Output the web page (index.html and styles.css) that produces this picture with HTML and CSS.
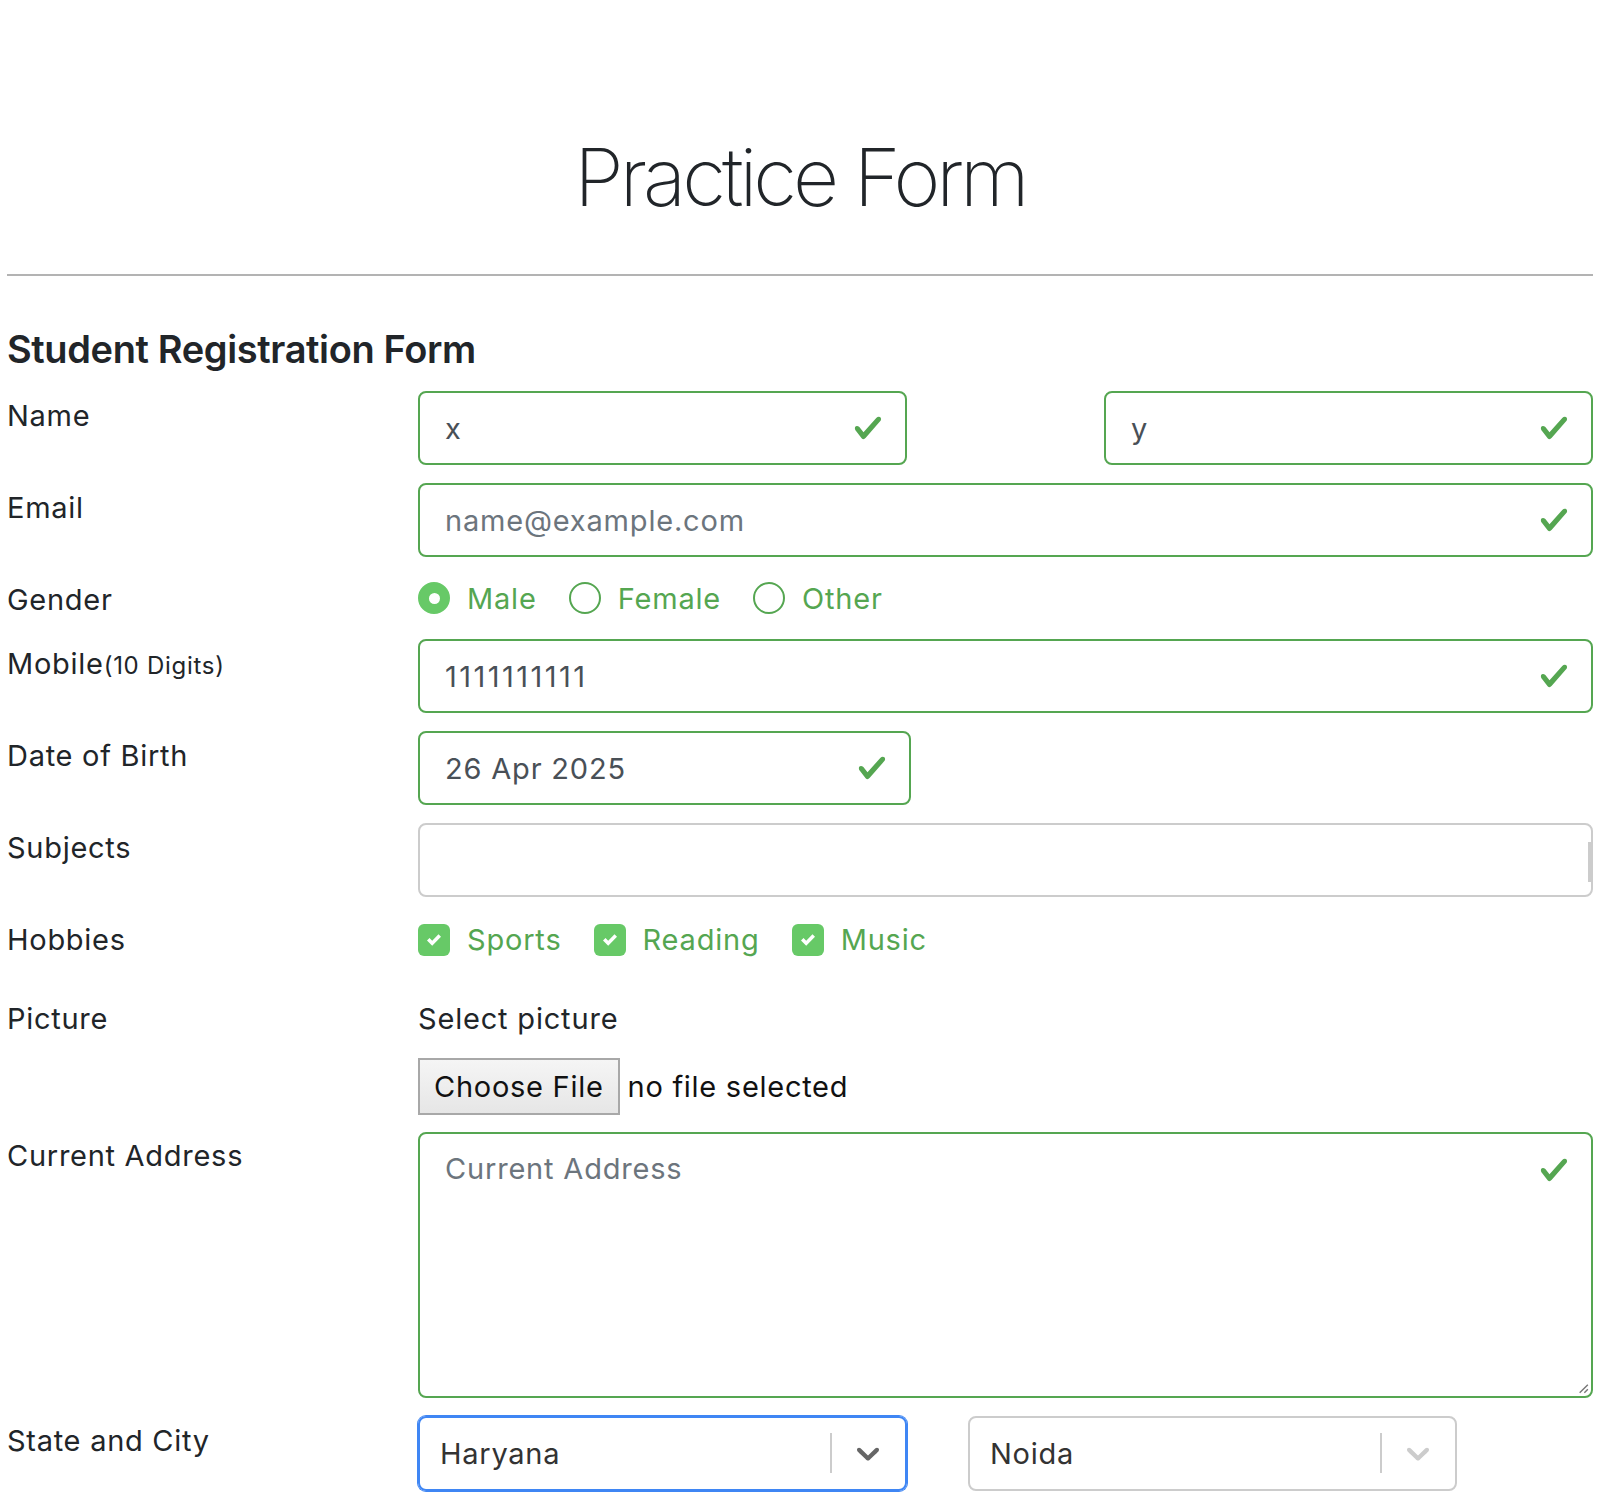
FILE: index.html
```html
<!DOCTYPE html>
<html lang="en">
<head>
<meta charset="utf-8">
<title>Practice Form</title>
<link rel="stylesheet" href="styles.css">
</head>
<body>
<div class="page">
  <h1 class="title">Practice Form</h1>
  <div class="divider"></div>
  <h2 class="subtitle">Student Registration Form</h2>

  <div class="row">
    <div class="label">Name</div>
    <div class="field split">
      <div class="box valid half"><span class="val">x</span><svg class="check" viewBox="0 0 8 8"><path d="M2.3 6.73L.6 4.53c-.4-1.04.46-1.4 1.1-.8l1.1 1.4 3.4-3.8c.6-.63 1.6-.27 1.2.7l-4 4.6c-.43.5-.8.4-1.1.1z"/></svg></div>
      <div class="box valid half"><span class="val">y</span><svg class="check" viewBox="0 0 8 8"><path d="M2.3 6.73L.6 4.53c-.4-1.04.46-1.4 1.1-.8l1.1 1.4 3.4-3.8c.6-.63 1.6-.27 1.2.7l-4 4.6c-.43.5-.8.4-1.1.1z"/></svg></div>
    </div>
  </div>

  <div class="row">
    <div class="label">Email</div>
    <div class="field">
      <div class="box valid"><span class="placeholder">name@example.com</span><svg class="check" viewBox="0 0 8 8"><path d="M2.3 6.73L.6 4.53c-.4-1.04.46-1.4 1.1-.8l1.1 1.4 3.4-3.8c.6-.63 1.6-.27 1.2.7l-4 4.6c-.43.5-.8.4-1.1.1z"/></svg></div>
    </div>
  </div>

  <div class="row row-gender">
    <div class="label">Gender</div>
    <div class="field options">
      <div class="opt"><span class="radio on"></span><span class="opt-text">Male</span></div>
      <div class="opt"><span class="radio"></span><span class="opt-text">Female</span></div>
      <div class="opt"><span class="radio"></span><span class="opt-text">Other</span></div>
    </div>
  </div>

  <div class="row">
    <div class="label">Mobile<small class="hint">(10 Digits)</small></div>
    <div class="field">
      <div class="box valid"><span class="val digits">1111111111</span><svg class="check" viewBox="0 0 8 8"><path d="M2.3 6.73L.6 4.53c-.4-1.04.46-1.4 1.1-.8l1.1 1.4 3.4-3.8c.6-.63 1.6-.27 1.2.7l-4 4.6c-.43.5-.8.4-1.1.1z"/></svg></div>
    </div>
  </div>

  <div class="row">
    <div class="label">Date of Birth</div>
    <div class="field">
      <div class="box valid date"><span class="val">26 Apr 2025</span><svg class="check" viewBox="0 0 8 8"><path d="M2.3 6.73L.6 4.53c-.4-1.04.46-1.4 1.1-.8l1.1 1.4 3.4-3.8c.6-.63 1.6-.27 1.2.7l-4 4.6c-.43.5-.8.4-1.1.1z"/></svg></div>
    </div>
  </div>

  <div class="row">
    <div class="label">Subjects</div>
    <div class="field">
      <div class="box subjects"></div>
    </div>
  </div>

  <div class="row row-hobbies">
    <div class="label">Hobbies</div>
    <div class="field options">
      <div class="opt"><span class="cbox"><svg viewBox="0 0 8 8"><path d="M6.564.75l-3.59 3.612-1.538-1.55L0 4.26 2.974 7.25 8 2.193z"/></svg></span><span class="opt-text">Sports</span></div>
      <div class="opt"><span class="cbox"><svg viewBox="0 0 8 8"><path d="M6.564.75l-3.59 3.612-1.538-1.55L0 4.26 2.974 7.25 8 2.193z"/></svg></span><span class="opt-text">Reading</span></div>
      <div class="opt"><span class="cbox"><svg viewBox="0 0 8 8"><path d="M6.564.75l-3.59 3.612-1.538-1.55L0 4.26 2.974 7.25 8 2.193z"/></svg></span><span class="opt-text">Music</span></div>
    </div>
  </div>

  <div class="row row-picture">
    <div class="label">Picture</div>
    <div class="field">
      <div class="select-pic">Select picture</div>
      <div class="file-line"><span class="file-btn">Choose File</span><span class="file-name">no file selected</span></div>
    </div>
  </div>

  <div class="row">
    <div class="label">Current Address</div>
    <div class="field">
      <div class="box valid area"><span class="placeholder">Current Address</span><svg class="check" viewBox="0 0 8 8"><path d="M2.3 6.73L.6 4.53c-.4-1.04.46-1.4 1.1-.8l1.1 1.4 3.4-3.8c.6-.63 1.6-.27 1.2.7l-4 4.6c-.43.5-.8.4-1.1.1z"/></svg><svg class="grip" viewBox="0 0 12 12"><path d="M11 4 L4 11 M11 8 L8 11"/></svg></div>
    </div>
  </div>

  <div class="row row-state">
    <div class="label">State and City</div>
    <div class="field selects">
      <div class="select focused"><span class="sel-val">Haryana</span><span class="sep"></span><svg class="chev" viewBox="0 0 20 20"><path d="M4.516 7.548c0.436-0.446 1.043-0.481 1.576 0l3.908 3.747 3.908-3.747c0.533-0.481 1.141-0.446 1.574 0 0.436 0.445 0.408 1.197 0 1.615-0.406 0.418-4.695 4.502-4.695 4.502-0.217 0.223-0.502 0.335-0.787 0.335s-0.57-0.112-0.789-0.335c0 0-4.287-4.084-4.695-4.502s-0.436-1.17 0-1.615z"/></svg></div>
      <div class="select"><span class="sel-val">Noida</span><span class="sep"></span><svg class="chev" viewBox="0 0 20 20"><path d="M4.516 7.548c0.436-0.446 1.043-0.481 1.576 0l3.908 3.747 3.908-3.747c0.533-0.481 1.141-0.446 1.574 0 0.436 0.445 0.408 1.197 0 1.615-0.406 0.418-4.695 4.502-4.695 4.502-0.217 0.223-0.502 0.335-0.787 0.335s-0.57-0.112-0.789-0.335c0 0-4.287-4.084-4.695-4.502s-0.436-1.17 0-1.615z"/></svg></div>
    </div>
  </div>
</div>
</body>
</html>
```

FILE: styles.css
```css
* { box-sizing: border-box; }

body {
  margin: 0;
  background: #fff;
  color: #212529;
  font-family: Inter, "Noto Sans", "Liberation Sans", sans-serif;
}

.page {
  margin-left: 7px;
  width: 1586px;
}

.title {
  margin: 0;
  padding-top: 137px;
  font-size: 80px;
  font-weight: 200;
  line-height: 80px;
  text-align: center;
  letter-spacing: -0.05em;
  color: #212529;
}

.divider {
  margin-top: 57px;
  border-top: 2px solid #b3b3b3;
}

.subtitle {
  margin: 55px 0 23px;
  font-size: 38px;
  font-weight: 600;
  line-height: 37px;
  letter-spacing: -0.01em;
}

.row {
  display: flex;
  margin-bottom: 18px;
}

.label {
  width: 411px;
  flex: none;
  padding-top: 4.5px;
  font-size: 29px;
  line-height: 40px;
  letter-spacing: 0.025em;
}

.hint {
  font-size: 24px;
  letter-spacing: 0.03em;
}

.field {
  flex: 1;
  min-width: 0;
}

.split {
  display: flex;
  justify-content: space-between;
}

.box {
  position: relative;
  display: flex;
  align-items: center;
  height: 74px;
  padding: 0 70px 0 25px;
  border: 2px solid #cccccc;
  border-radius: 8px;
  font-size: 29px;
  letter-spacing: 0.028em;
  color: #495057;
}

.box.valid { border-color: #55a651; }
.box.half { width: 489px; }
.box.date { width: 493px; }

.digits { letter-spacing: 0.085em; }

.placeholder { color: #6c757d; }

.check {
  position: absolute;
  right: 22px;
  top: 50%;
  width: 30px;
  height: 30px;
  margin-top: -15px;
  fill: #55a651;
}

.subjects::after {
  content: "";
  position: absolute;
  right: 0;
  top: 17px;
  width: 3px;
  height: 40px;
  background: #cccccc;
}

/* gender & hobbies */
.options {
  display: flex;
  align-items: center;
  height: 46px;
  gap: 32px;
  font-size: 29px;
  letter-spacing: 0.028em;
}

.opt {
  display: flex;
  align-items: center;
  gap: 17px;
}

.opt-text { color: #55a651; }

.radio {
  position: relative;
  width: 32px;
  height: 32px;
  border: 2px solid #55a651;
  border-radius: 50%;
}

.radio.on {
  border-color: #67c967;
  background: #67c967;
}

.radio.on::after {
  content: "";
  position: absolute;
  left: 50%;
  top: 50%;
  width: 11px;
  height: 11px;
  margin: -5.5px 0 0 -5.5px;
  border-radius: 50%;
  background: #fff;
}

.row-hobbies { margin-bottom: 0; }
.row-hobbies .options { height: 79px; align-items: flex-start; padding-top: 7px; gap: 32px; }

.cbox {
  display: flex;
  align-items: center;
  justify-content: center;
  width: 32px;
  height: 32px;
  border-radius: 6px;
  background: #67c967;
}

.cbox svg {
  width: 14px;
  height: 14px;
  fill: #fff;
}

/* picture */
.row-picture { margin-bottom: 17px; }

.select-pic {
  padding-top: 4.5px;
  font-size: 29px;
  line-height: 40px;
  letter-spacing: 0.028em;
}

.file-line {
  display: flex;
  align-items: center;
  margin-top: 19px;
  gap: 8px;
  font-size: 29px;
  letter-spacing: 0.025em;
}

.file-btn {
  display: flex;
  align-items: center;
  height: 57px;
  padding: 0 14px;
  border: 2px solid #a8a8a8;
  background: linear-gradient(#f5f5f5, #e6e6e6);
  color: #111;
}

.file-name { color: #111; }

/* textarea */
.box.area {
  height: 266px;
  align-items: flex-start;
  padding-top: 17px;
}

.area .check {
  top: 21px;
  margin-top: 0;
}

.grip {
  position: absolute;
  right: 2px;
  bottom: 2px;
  width: 14px;
  height: 14px;
  fill: none;
  stroke: #777;
  stroke-width: 1.2;
}

/* selects */
.row-state { margin-top: 0; }
.row-state .label { padding-top: 5px; }

.selects {
  display: flex;
  gap: 61px;
}

.select {
  display: flex;
  align-items: center;
  width: 489px;
  height: 75px;
  padding-left: 20px;
  border: 2px solid #cccccc;
  border-radius: 8px;
  font-size: 29px;
  letter-spacing: 0.025em;
  color: #333;
}

.select.focused {
  border-color: #3f86f4;
  box-shadow: 0 0 0 1px #3f86f4;
}

.sel-val { flex: 1; }

.sep {
  width: 2px;
  height: 40px;
  background: #cccccc;
}

.chev {
  width: 38px;
  height: 38px;
  margin: 0 18px 0 17px;
  fill: #cccccc;
}

.focused .chev { fill: #666666; }
```
